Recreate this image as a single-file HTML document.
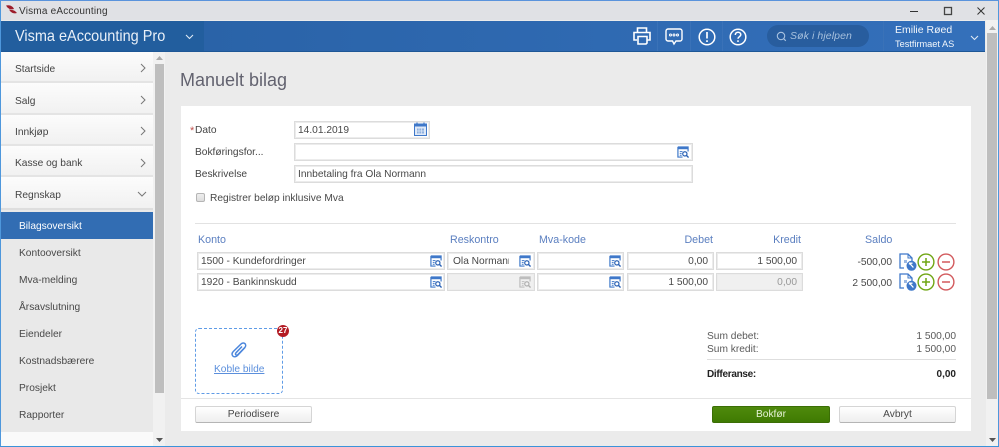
<!DOCTYPE html>
<html><head><meta charset="utf-8"><style>
html,body{margin:0;padding:0;width:999px;height:447px;overflow:hidden;background:#ebebeb;font-family:"Liberation Sans",sans-serif;font-size:10.2px;line-height:13px;letter-spacing:0;color:#444}
.a{position:absolute;white-space:nowrap}
.nav{position:absolute;left:1px;width:152px;background:linear-gradient(#fcfcfc,#f1f1f1);border-bottom:2px solid #e4e4e4;box-sizing:border-box}
.nt{position:absolute;left:15px;color:#444;white-space:nowrap}
.sub{position:absolute;left:19px;color:#484848;white-space:nowrap}
.in{position:absolute;box-sizing:border-box;height:18px;background:#fff;border:1px solid #dcdcdc;box-shadow:inset 0 0 0 1px #ececec;padding:2px 3px;line-height:14px;color:#484848;white-space:nowrap;overflow:hidden}
.r{text-align:right;padding-right:5px}
.dis{background:#f0f0f0}
.h{position:absolute;color:#5b7fc0;font-size:10.7px;white-space:nowrap}
.btn{position:absolute;box-sizing:border-box;height:17px;border:1px solid #d5d5d5;border-bottom:1px solid #b5b5b5;border-radius:2px;background:linear-gradient(#fff,#eee);text-align:center;line-height:15px;color:#484848}
svg{position:absolute;overflow:visible}
</style></head><body>
<svg width="0" height="0" style="position:absolute"><defs>
<symbol id="lk" viewBox="0 0 13 13"><path d="M1 1h11v5M1 1v11h5" fill="none" stroke="#3f78c9" stroke-width="1.3"/><path d="M1 1h11v2.5H1z" fill="#3f78c9"/><path d="M3 6h3M3 8h2M3 10h2" stroke="#3f78c9" stroke-width="1"/><circle cx="8.5" cy="8.5" r="2.3" fill="none" stroke="#2a62b5" stroke-width="1.3"/><path d="M10.2 10.2L12.5 12.5" stroke="#2a62b5" stroke-width="1.5"/></symbol>
<symbol id="lkd" viewBox="0 0 13 13"><path d="M1 1h11v5M1 1v11h5" fill="none" stroke="#bdbdbd" stroke-width="1.3"/><path d="M1 1h11v2.5H1z" fill="#bdbdbd"/><path d="M3 6h3M3 8h2M3 10h2" stroke="#bdbdbd"/><circle cx="8.5" cy="8.5" r="2.3" fill="none" stroke="#b0b0b0" stroke-width="1.3"/><path d="M10.2 10.2L12.5 12.5" stroke="#b0b0b0" stroke-width="1.5"/></symbol>
<symbol id="doc" viewBox="0 0 18 18"><path d="M5 15H1V1h8l4 4v3" fill="none" stroke="#3f78c9" stroke-width="1.3"/><path d="M9 1v4h4" fill="none" stroke="#3f78c9"/><path d="M5 7h3v3H5z" fill="#9db9e3"/><circle cx="12.5" cy="12.800" r="5" fill="#3f78c9"/><path d="M10.500 11.500v-1.300h3M10.800 10.500l3.600 4" stroke="#fff" stroke-width="1.300" fill="none"/></symbol>
<symbol id="plus" viewBox="0 0 18 18"><circle cx="9" cy="9" r="7.9" fill="#fff" stroke="#6fa512" stroke-width="1.4"/><path d="M9 5v8M5 9h8" stroke="#6fa512" stroke-width="1.5"/></symbol>
<symbol id="minus" viewBox="0 0 18 18"><circle cx="9" cy="9" r="7.9" fill="#fff" stroke="#d2595c" stroke-width="1.4"/><path d="M5 9h8" stroke="#d2595c" stroke-width="1.5"/></symbol>
</defs></svg>

<!-- window -->
<div class="a" style="left:0;top:0;width:999px;height:1px;background:#5a93dc"></div>
<div class="a" style="left:0;top:1px;width:999px;height:19px;background:#e0e1e5"></div>
<svg style="left:6px;top:5px" width="11" height="9" viewBox="0 0 11 9"><path d="M0 .5C4-.5 7 1.500 8 4 5 5 2 4 0 .5zM3 4.500c3 .5 5 .5 6.500 2L11 8C8 9 5 8 3 4.500z" fill="#9c1c2b"/></svg>
<div class="a" style="left:19px;top:5px;font-size:10px;color:#333;letter-spacing:.2px">Visma eAccounting</div>
<svg style="left:910px;top:7px" width="80" height="10"><path d="M0 4.500h8" stroke="#333" stroke-width="1"/><rect x="34.500" y=".5" width="7" height="7" fill="none" stroke="#444" stroke-width="1.300"/><path d="M67.500 .5l7 7M74.500 .5l-7 7" stroke="#333" stroke-width="1"/></svg>

<!-- header -->
<div class="a" style="left:1px;top:21px;width:203px;height:30px;background:#225e9e"></div>
<div class="a" style="left:204px;top:21px;width:781px;height:30px;background:linear-gradient(90deg,#2a63a8,#3470bb)"></div>
<div class="a" style="left:1px;top:51px;width:984px;height:1px;background:#1e5796"></div>
<div class="a" style="left:15px;top:27px;font-size:16px;line-height:20px;color:#e9f0f8;transform:scaleX(.905);transform-origin:left center">Visma eAccounting Pro</div>
<svg style="left:185px;top:34px" width="9" height="6"><path d="M1 1l3.500 3.500L8 1" fill="none" stroke="#dfe9f5" stroke-width="1.100"/></svg>
<div class="a" style="left:657px;top:21px;width:1px;height:30px;background:#3a72b8"></div>
<div class="a" style="left:690px;top:21px;width:1px;height:30px;background:#3a72b8"></div>
<div class="a" style="left:722px;top:21px;width:1px;height:30px;background:#3a72b8"></div>
<div class="a" style="left:883px;top:21px;width:1px;height:30px;background:#3a72b8"></div>
<svg style="left:633px;top:27px" width="18" height="18" viewBox="0 0 18 18" fill="none" stroke="#fff" stroke-width="1.600"><path d="M4.500 5V1h9v4"/><path d="M4 13H1V5.500h16V13h-3"/><path d="M5 9.500h9v6.500l-1 1H5z"/></svg>
<svg style="left:665px;top:28px" width="18" height="18" viewBox="0 0 18 18" fill="none" stroke="#fff" stroke-width="1.400"><path d="M3 1h12a2 2 0 0 1 2 2v8a2 2 0 0 1-2 2h-4l-2 3-1.500-3H3a2 2 0 0 1-2-2V3a2 2 0 0 1 2-2z"/><circle cx="5.500" cy="7" r="1" stroke-width="1"/><circle cx="9" cy="7" r="1" stroke-width="1"/><circle cx="12.500" cy="7" r="1" stroke-width="1"/></svg>
<svg style="left:698px;top:28px" width="18" height="18" viewBox="0 0 18 18"><circle cx="9" cy="9" r="7.800" fill="none" stroke="#fff" stroke-width="1.500"/><path d="M9 4v6.500M9 12.300v1.700" stroke="#fff" stroke-width="1.700"/></svg>
<svg style="left:729px;top:28px" width="18" height="18" viewBox="0 0 18 18"><circle cx="9" cy="9" r="7.800" fill="none" stroke="#fff" stroke-width="1.500"/><path d="M6.300 7c0-1.800 1.200-2.800 2.800-2.800S11.800 5.200 11.800 6.800 9 8.800 9 10.800M9 12.300v1.700" fill="none" stroke="#fff" stroke-width="1.500"/></svg>
<div class="a" style="left:767px;top:25px;width:102px;height:22px;border-radius:11px;background:#285d9e"></div>
<svg style="left:776px;top:31px" width="11" height="11" fill="none" stroke="#a9c3e0" stroke-width="1.100"><circle cx="5" cy="5" r="3.700"/><path d="M7.800 7.800l2 2"/></svg>
<div class="a" style="left:790px;top:30px;font-size:10.500px;font-style:italic;color:#a6c0dd;letter-spacing:.1px">Søk i hjelpen</div>
<div class="a" style="left:895px;top:24px;font-size:10.500px;color:#f2f6fb">Emilie Røed</div>
<div class="a" style="left:895px;top:38px;font-size:9.200px;color:#f2f6fb">Testfirmaet AS</div>
<svg style="left:970px;top:35px" width="9" height="6"><path d="M1 1l3.500 3.500L8 1" fill="none" stroke="#dfe9f5" stroke-width="1.100"/></svg>

<!-- left edge / bottom edge -->
<div class="a" style="left:0;top:1px;width:1px;height:446px;background:#4e97dc"></div>
<div class="a" style="left:998px;top:1px;width:1px;height:446px;background:#4e97dc"></div>

<!-- sidebar -->
<div class="a" style="left:1px;top:52px;width:152px;height:395px;background:#e9e9e9"></div>
<div class="nav" style="top:52px;height:31px"></div>
<div class="nav" style="top:83px;height:32px"></div>
<div class="nav" style="top:115px;height:31px"></div>
<div class="nav" style="top:146px;height:31px"></div>
<div class="nav" style="top:177px;height:33px;border-bottom:2px solid #dedede"></div>
<div class="nt" style="top:63px">Startside</div>
<div class="nt" style="top:95px">Salg</div>
<div class="nt" style="top:126px">Innkjøp</div>
<div class="nt" style="top:157px">Kasse og bank</div>
<div class="nt" style="top:189px">Regnskap</div>
<svg style="left:140px;top:63px" width="6" height="10"><path d="M1 1l4 4-4 4" fill="none" stroke="#777" stroke-width="1"/></svg>
<svg style="left:140px;top:95px" width="6" height="10"><path d="M1 1l4 4-4 4" fill="none" stroke="#777" stroke-width="1"/></svg>
<svg style="left:140px;top:126px" width="6" height="10"><path d="M1 1l4 4-4 4" fill="none" stroke="#777" stroke-width="1"/></svg>
<svg style="left:140px;top:158px" width="6" height="10"><path d="M1 1l4 4-4 4" fill="none" stroke="#777" stroke-width="1"/></svg>
<svg style="left:137px;top:191px" width="10" height="6"><path d="M1 1l4 4 4-4" fill="none" stroke="#777" stroke-width="1"/></svg>
<div class="a" style="left:1px;top:212px;width:152px;height:27px;background:#326db3"></div>
<div class="sub" style="top:220px;color:#fff">Bilagsoversikt</div>
<div class="sub" style="top:247px">Kontooversikt</div>
<div class="sub" style="top:274px">Mva-melding</div>
<div class="sub" style="top:301px">Årsavslutning</div>
<div class="sub" style="top:328px">Eiendeler</div>
<div class="sub" style="top:355px">Kostnadsbærere</div>
<div class="sub" style="top:382px">Prosjekt</div>
<div class="sub" style="top:409px">Rapporter</div>
<div class="a" style="left:1px;top:432px;width:152px;height:14px;background:#fafafa"></div>

<!-- sidebar scrollbar -->
<div class="a" style="left:153px;top:52px;width:12px;height:394px;background:#f1f1f1"></div>
<div class="a" style="left:155px;top:64px;width:9px;height:329px;background:#bebebe"></div>
<svg style="left:156px;top:56px" width="7" height="4"><path d="M3.500 0L7 4H0z" fill="#aaa"/></svg>
<svg style="left:156px;top:438px" width="7" height="4"><path d="M3.500 4L7 0H0z" fill="#555"/></svg>

<!-- main scrollbar -->
<div class="a" style="left:986px;top:20px;width:12px;height:426px;background:#f1f1f1"></div>
<div class="a" style="left:987px;top:33px;width:10px;height:366px;background:#bebebe"></div>
<svg style="left:989px;top:26px" width="7" height="4"><path d="M3.500 0L7 4H0z" fill="#aaa"/></svg>
<svg style="left:989px;top:438px" width="7" height="4"><path d="M3.500 4L7 0H0z" fill="#555"/></svg>
<div class="a" style="left:0;top:446px;width:999px;height:1px;background:#3b93d9"></div>

<!-- title -->
<div class="a" style="left:180px;top:68px;font-size:18px;line-height:24px;color:#62626f">Manuelt bilag</div>

<!-- card -->
<div class="a" style="left:181px;top:106px;width:790px;height:325px;background:#fff"></div>
<div class="a" style="left:181px;top:398px;width:790px;height:1px;background:#e4e4e4"></div>

<!-- form -->
<div class="a" style="left:190px;top:125px;color:#c0504d;font-size:11px">*</div>
<div class="a" style="left:195px;top:124px;color:#444">Dato</div>
<div class="a" style="left:195px;top:146px;color:#444">Bokføringsfor...</div>
<div class="a" style="left:195px;top:168px;color:#444">Beskrivelse</div>
<div class="in" style="left:294px;top:121px;width:136px">14.01.2019</div>
<svg style="left:414px;top:122px" width="13" height="14" viewBox="0 0 13 14"><rect x=".5" y="2" width="12" height="11.500" fill="#dfe9f7" stroke="#3f78c9"/><path d="M.5 2h12v2.500H.5z" fill="#3f78c9"/><path d="M3 .5v2.500M10 .5v2.500" stroke="#3f78c9" stroke-width="1.200"/><path d="M3 6.500h7v5H3z" fill="#8fb0de"/><path d="M5 6.500v5M7.500 6.500v5M3 9h7" stroke="#dfe9f7" stroke-width=".7"/></svg>
<div class="in" style="left:294px;top:143px;width:399px"></div>
<svg style="left:677px;top:146px" width="12" height="12"><use href="#lk"/></svg>
<div class="in" style="left:294px;top:165px;width:399px">Innbetaling fra Ola Normann</div>
<div class="a" style="left:196px;top:193px;width:7px;height:7px;border:1px solid #b5b5b5;border-radius:2px;background:linear-gradient(#eee,#ddd)"></div>
<div class="a" style="left:210px;top:192px;color:#484848">Registrer beløp inklusive Mva</div>
<div class="a" style="left:195px;top:223px;width:761px;height:1px;background:#e2e2e2"></div>

<!-- table headers -->
<div class="h" style="left:198px;top:234px">Konto</div>
<div class="h" style="left:450px;top:234px">Reskontro</div>
<div class="h" style="left:539px;top:234px">Mva-kode</div>
<div class="h" style="right:286px;top:234px">Debet</div>
<div class="h" style="right:198px;top:234px">Kredit</div>
<div class="h" style="left:865px;top:234px">Saldo</div>

<!-- row 1 -->
<div class="in" style="left:197px;top:252px;width:248px">1500 - Kundefordringer</div>
<svg style="left:430px;top:255px" width="12" height="12"><use href="#lk"/></svg>
<div class="in" style="left:447px;top:252px;width:88px;padding-left:5px">Ola Normann</div>
<div class="a" style="left:509px;top:254px;width:24px;height:14px;background:#fff"></div>
<svg style="left:519px;top:255px" width="12" height="12"><use href="#lk"/></svg>
<div class="in" style="left:537px;top:252px;width:87px"></div>
<svg style="left:609px;top:255px" width="12" height="12"><use href="#lk"/></svg>
<div class="in r" style="left:627px;top:252px;width:87px">0,00</div>
<div class="in r" style="left:716px;top:252px;width:87px">1 500,00</div>
<div class="a" style="right:107px;top:256px;color:#484848">-500,00</div>
<svg style="left:899px;top:253px" width="18" height="18"><use href="#doc"/></svg>
<svg style="left:917px;top:253px" width="18" height="18"><use href="#plus"/></svg>
<svg style="left:937px;top:253px" width="18" height="18"><use href="#minus"/></svg>

<!-- row 2 -->
<div class="in" style="left:197px;top:273px;width:248px">1920 - Bankinnskudd</div>
<svg style="left:430px;top:276px" width="12" height="12"><use href="#lk"/></svg>
<div class="in dis" style="left:447px;top:273px;width:88px"></div>
<svg style="left:519px;top:276px" width="12" height="12"><use href="#lkd"/></svg>
<div class="in" style="left:537px;top:273px;width:87px"></div>
<svg style="left:609px;top:276px" width="12" height="12"><use href="#lk"/></svg>
<div class="in r" style="left:627px;top:273px;width:87px">1 500,00</div>
<div class="in r dis" style="left:716px;top:273px;width:87px;color:#999">0,00</div>
<div class="a" style="right:107px;top:277px;color:#484848">2 500,00</div>
<svg style="left:899px;top:273px" width="18" height="18"><use href="#doc"/></svg>
<svg style="left:917px;top:273px" width="18" height="18"><use href="#plus"/></svg>
<svg style="left:937px;top:273px" width="18" height="18"><use href="#minus"/></svg>

<!-- upload -->
<div class="a" style="left:195px;top:328px;width:86px;height:64px;border:1px dashed #5f9be6;border-radius:4px"></div>
<div class="a" style="left:277px;top:325px;width:12px;height:12px;border-radius:50%;background:#b31b24;color:#fff;font-size:8px;line-height:12px;text-align:center;font-weight:bold">27</div>
<svg style="left:231px;top:342px" width="17" height="18" viewBox="0 0 17 18" fill="none" stroke="#4b86dc" stroke-width="1.500"><path d="M14 5.500L6.500 13.500c-1.500 1.500-3.500 1.700-4.700.5s-1-3 .5-4.500L10 2c1.200-1.200 3-1.300 4-.3s.9 2.700-.3 3.900L7 12.500c-.7.700-1.700.8-2.200.3s-.4-1.400.3-2.100L11 4.500"/></svg>
<div class="a" style="left:214px;top:363px;color:#5b8fdc;text-decoration:underline">Koble bilde</div>

<!-- sums -->
<div class="a" style="left:707px;top:330px;color:#5a5a5a">Sum debet:</div>
<div class="a" style="left:707px;top:343px;color:#5a5a5a">Sum kredit:</div>
<div class="a" style="right:43px;top:330px;color:#5a5a5a">1 500,00</div>
<div class="a" style="right:43px;top:343px;color:#5a5a5a">1 500,00</div>
<div class="a" style="left:707px;top:359px;width:249px;height:1px;background:#dedede"></div>
<div class="a" style="left:707px;top:368px;color:#222;font-weight:bold;font-size:10px;letter-spacing:-.3px">Differanse:</div>
<div class="a" style="right:43px;top:368px;color:#222;font-weight:bold;font-size:10px">0,00</div>

<!-- buttons -->
<div class="btn" style="left:195px;top:406px;width:117px">Periodisere</div>
<div class="btn" style="left:712px;top:406px;width:118px;background:linear-gradient(#4f8a0c,#3f7a02);border:1px solid #3b6e05;color:#e6f2d6">Bokfør</div>
<div class="btn" style="left:839px;top:406px;width:117px">Avbryt</div>
</body></html>
